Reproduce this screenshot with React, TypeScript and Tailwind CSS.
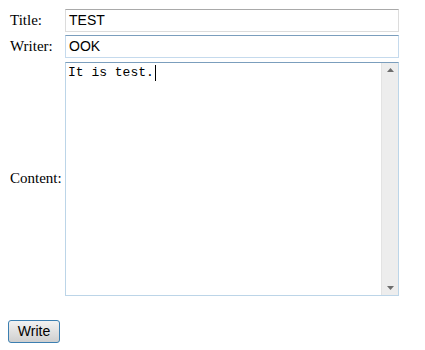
export default function App() {
  const label = "text-[15px] text-black";
  return (
    <div className="w-[425px] h-[350px] bg-white pl-[10px] pt-[9px] font-['Liberation_Serif',serif]">
      <div className="grid grid-cols-[55px_334px] gap-y-[3px] items-center">
        <span className={label}>Title:</span>
        <div className="h-[23px] border border-[#dcdcdc] border-t-[#a9a9a9] bg-white flex items-center pl-[3px] font-['Liberation_Sans',sans-serif] text-[14px] text-black">
          TEST
        </div>
        <span className={label}>Writer:</span>
        <div className="h-[23px] border border-[#c5daed] border-t-[#7b9ebd] bg-white flex items-center pl-[3px] font-['Liberation_Sans',sans-serif] text-[14px] text-black">
          OOK
        </div>
        <span className={label}>Content:</span>
        <div className="h-[234px] mt-[1px] border border-[#bcd5e8] border-t-[#7b9ebd] bg-white flex">
          <div className="flex-1 pl-[2px] pt-[2px] font-['Liberation_Mono',monospace] text-[13px] leading-[16px] text-black">
            It is test.<span className="inline-block w-px h-[16px] bg-black align-top ml-[1px]" />
          </div>
          <div className="w-[17px] bg-[#ededed] border-l border-[#e3e3e3] flex flex-col justify-between items-center py-[5px]">
            <svg width="7" height="4" viewBox="0 0 7 4">
              <path d="M3.5 0L7 4H0z" fill="#6d6d6d" />
            </svg>
            <svg width="7" height="4" viewBox="0 0 7 4">
              <path d="M0 0H7L3.5 4z" fill="#6d6d6d" />
            </svg>
          </div>
        </div>
      </div>
      <div className="mt-[23px] -ml-[2px]">
        <button className="w-[52px] h-[23px] rounded-[3px] border border-[#3c7fb1] bg-gradient-to-b from-[#f2f2f2] to-[#cfcfcf] font-['Liberation_Sans',sans-serif] text-[14px] text-black">
          Write
        </button>
      </div>
    </div>
  );
}
